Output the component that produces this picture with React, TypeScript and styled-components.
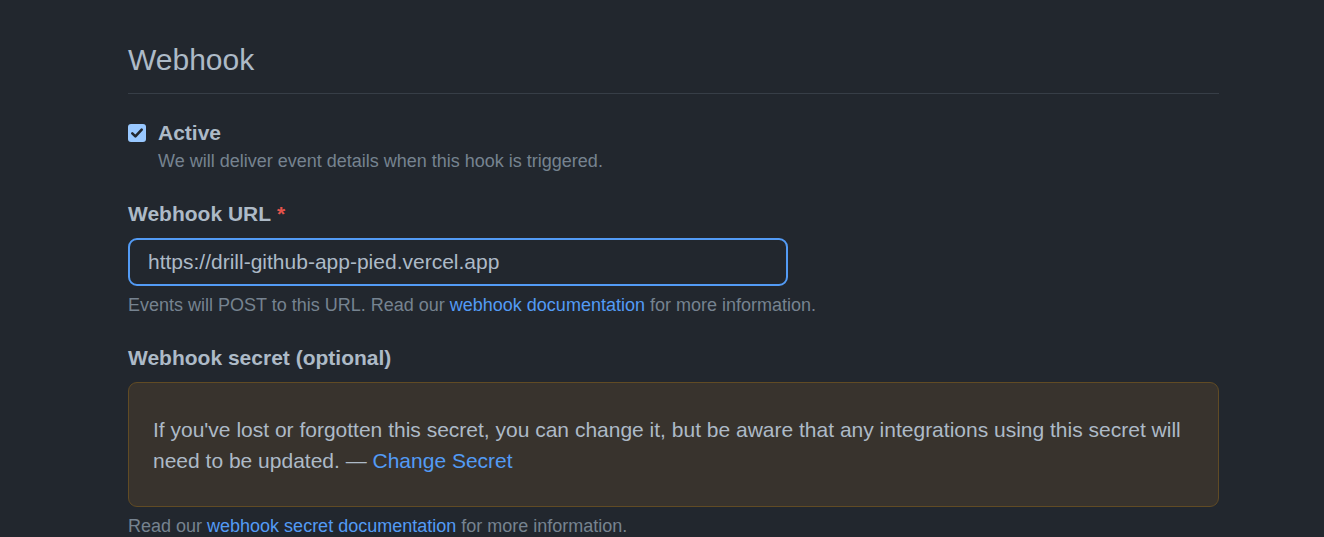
import React from "react";
import styled, { createGlobalStyle } from "styled-components";

const Global = createGlobalStyle`
  html, body { margin: 0; padding: 0; background: #22272e; }
  body { font-family: "Liberation Sans", Arial, sans-serif; color: #adbac7; }
  * { box-sizing: border-box; }
`;

const Page = styled.div`
  padding: 37px 0 0 128px;
  min-height: 537px;
  background: #22272e;
`;

const Content = styled.div`
  width: 1091px;
  display: flex;
  flex-direction: column;
`;

const Subhead = styled.div`
  padding-bottom: 11px;
  border-bottom: 1px solid #373e47;
`;

const Heading = styled.h2`
  margin: 0;
  font-size: 30px;
  line-height: 45px;
  font-weight: 400;
  color: #adbac7;
`;

const CheckRow = styled.div`
  margin-top: 24px;
  display: flex;
  gap: 12px;
  align-items: flex-start;
`;

const Box = styled.span`
  width: 18px;
  height: 18px;
  margin-top: 6px;
  border-radius: 3px;
  background: #99c8ff;
  display: flex;
  align-items: center;
  justify-content: center;
  flex: none;
`;

const CheckText = styled.div`
  display: flex;
  flex-direction: column;
`;

const Strong = styled.label<{ $top?: number }>`
  font-size: 21px;
  line-height: 30px;
  font-weight: 700;
  color: #adbac7;
  margin-top: ${(p) => p.$top ?? 0}px;
`;

const Note = styled.p<{ $top?: number }>`
  margin: ${(p) => p.$top ?? 0}px 0 0;
  font-size: 18px;
  line-height: 27px;
  color: #768390;
`;

const Link = styled.a`
  color: #539bf5;
  text-decoration: none;
`;

const Req = styled.span`
  color: #e5534b;
  margin-left: 6px;
`;

const Input = styled.div`
  margin-top: 9px;
  width: 660px;
  height: 48px;
  border: 2px solid #539bf5;
  border-radius: 9px;
  padding: 0 18px;
  display: flex;
  align-items: center;
  font-size: 21px;
  color: #adbac7;
  background: #22272e;
`;

const Flash = styled.div`
  margin-top: 9px;
  padding: 31px 24px 30px;
  border: 1px solid #614b24;
  border-radius: 9px;
  background: #38332d;
  font-size: 21px;
  line-height: 31px;
  color: #adbac7;
`;

const Check = () => (
  <svg width="14" height="14" viewBox="0 0 14 14">
    <path d="M2.3 7.4 L5.4 10.4 L11.7 3.6" fill="none" stroke="#22272e" strokeWidth="2.6" strokeLinecap="round" strokeLinejoin="round" />
  </svg>
);

export default function App() {
  return (
    <>
      <Global />
      <Page>
        <Content>
          <Subhead>
            <Heading>Webhook</Heading>
          </Subhead>
          <CheckRow>
            <Box>
              <Check />
            </Box>
            <CheckText>
              <Strong>Active</Strong>
              <Note>We will deliver event details when this hook is triggered.</Note>
            </CheckText>
          </CheckRow>
          <Strong $top={24}>
            Webhook URL<Req>*</Req>
          </Strong>
          <Input>https://drill-github-app-pied.vercel.app</Input>
          <Note $top={6}>
            Events will POST to this URL. Read our <Link>webhook documentation</Link> for more information.
          </Note>
          <Strong $top={24}>Webhook secret (optional)</Strong>
          <Flash>
            If you've lost or forgotten this secret, you can change it, but be aware that any integrations using this secret will need to be updated. — <Link>Change Secret</Link>
          </Flash>
          <Note $top={6}>
            Read our <Link>webhook secret documentation</Link> for more information.
          </Note>
        </Content>
      </Page>
    </>
  );
}
